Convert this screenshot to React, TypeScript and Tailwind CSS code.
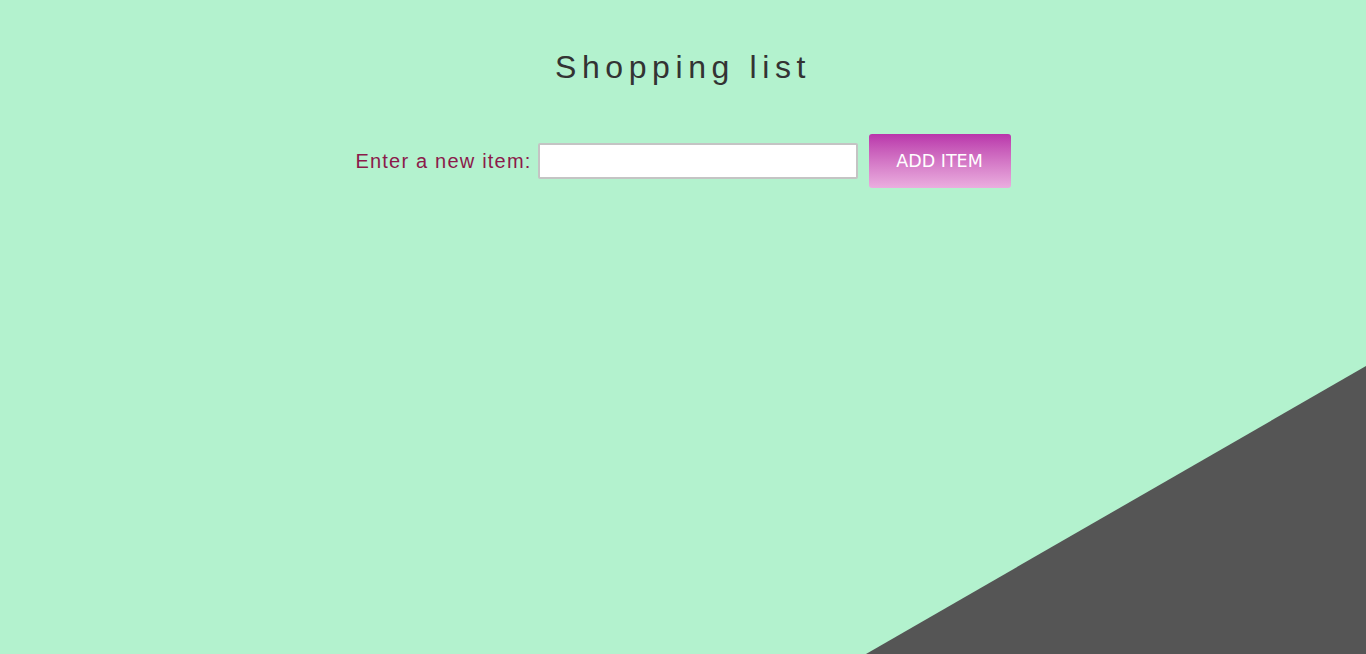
export default function App() {
  return (
    <div className="relative h-[654px] w-full overflow-hidden bg-[#b3f2ce]">
      <svg
        className="absolute bottom-0 right-0"
        width="500"
        height="288"
        viewBox="0 0 500 288"
        preserveAspectRatio="none"
      >
        <polygon points="500,0 500,288 0,288" fill="#555555" />
      </svg>

      <div className="relative flex flex-col items-center pt-[48px]">
        <h1 className="font-['Liberation_Sans',Arial,sans-serif] text-[32px] leading-[38px] tracking-[5.6px] text-[#333333]">
          Shopping list
        </h1>

        <div className="mt-[48px] flex items-center">
          <label className="mr-[6px] font-['Liberation_Sans',Arial,sans-serif] text-[20px] tracking-[1.2px] text-[#8b1a4a]">
            Enter a new item:
          </label>
          <input
            type="text"
            className="h-[36px] w-[320px] rounded-[2px] border-2 border-[#c4c4c4] bg-white px-2 outline-none"
          />
          <button className="ml-[11px] h-[54px] w-[142px] rounded-[3px] bg-gradient-to-b from-[#b935ab] to-[#eaaedf] font-['DejaVu_Sans',Verdana,sans-serif] text-[17.5px] text-white">
            ADD ITEM
          </button>
        </div>
      </div>
    </div>
  );
}
